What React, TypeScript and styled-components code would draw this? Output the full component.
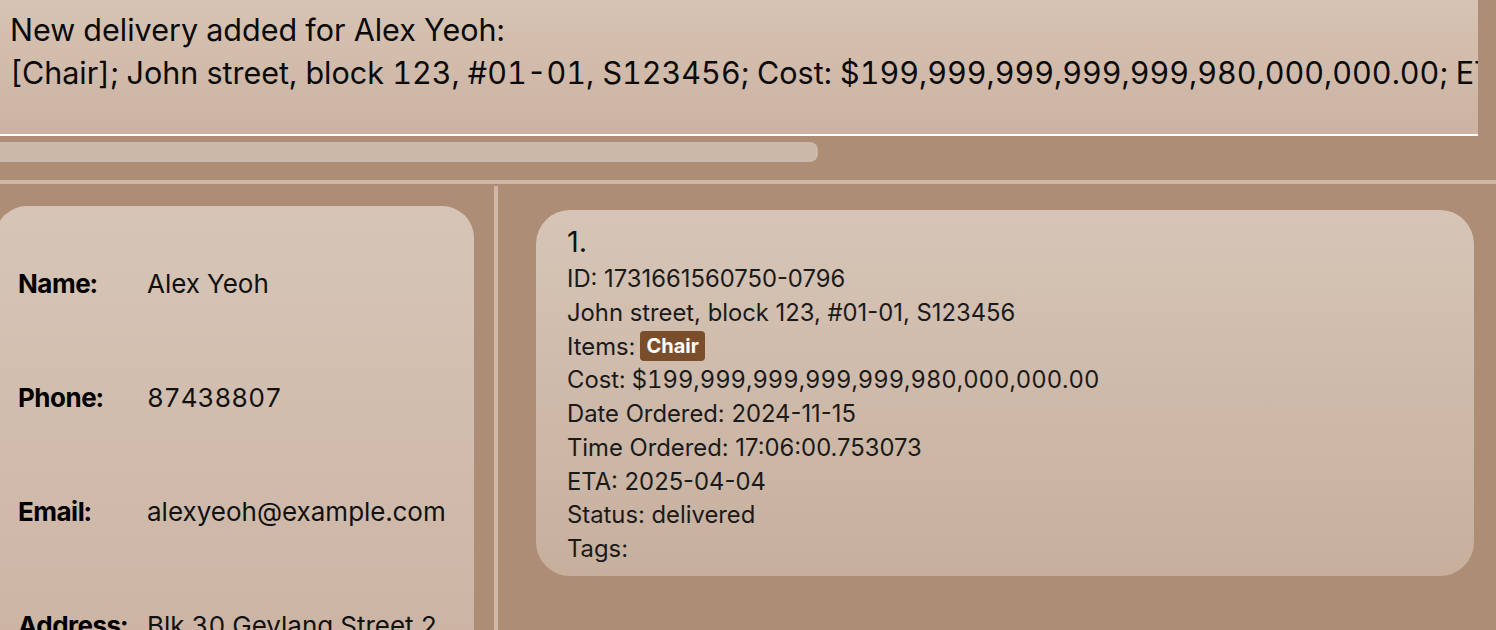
import React from "react";
import styled, { createGlobalStyle } from "styled-components";

const Global = createGlobalStyle`
  html, body { margin: 0; padding: 0; }
  body { font-family: Inter, "Noto Sans", sans-serif; background: #ad8d75; }
`;

const Window = styled.div`
  width: 1496px;
  height: 630px;
  overflow: hidden;
  background: #ad8d75;
  display: flex;
  flex-direction: column;
  font-family: Inter, "Noto Sans", sans-serif;
  color: #111;
`;

const ResultBox = styled.div`
  width: 1478px;
  height: 136px;
  box-sizing: border-box;
  padding: 8px 10px;
  background: linear-gradient(180deg, #d6c3b3 0%, #d4bfaf 25%, #ccb2a2 100%);
  border-bottom: 2px solid #ffffff;
  font-size: 30.5px;
  line-height: 43px;
  font-feature-settings: "tnum" 1;
  white-space: pre;
  overflow: hidden;
  color: #0a0a0a;
  flex: none;
`;

const ScrollTrack = styled.div`
  height: 44px;
  padding-top: 6px;
  box-sizing: border-box;
  flex: none;
`;

const ScrollThumb = styled.div`
  width: 818px;
  height: 20px;
  background: #ccb8a8;
  border-radius: 0 8px 8px 0;
`;

const HDivider = styled.div`
  height: 4px;
  background: #cfb8a8;
  flex: none;
`;

const Main = styled.div`
  flex: 1;
  display: flex;
  min-height: 0;
`;

const LeftPane = styled.div`
  width: 494px;
  flex: none;
  padding-top: 22px;
  box-sizing: border-box;
  overflow: hidden;
`;

const VDivider = styled.div`
  width: 4px;
  margin-top: 2px;
  background: #cfb8a8;
  flex: none;
`;

const RightPane = styled.div`
  flex: 1;
  padding: 26px 0 0 38px;
  box-sizing: border-box;
`;

const PersonCard = styled.div`
  margin-left: -5px;
  width: 479px;
  height: 520px;
  box-sizing: border-box;
  padding: 21px 0 0 23px;
  border-radius: 32px 32px 0 0;
  background: linear-gradient(180deg, #d6c5b7 0%, #cdb5a5 80%, #c8ae9d 100%);
  display: grid;
  grid-template-columns: 129px 302px;
  grid-auto-rows: 114px;
  align-items: start;
  font-size: 26px;
  line-height: 32px;
  font-feature-settings: "tnum" 1;
`;

const FieldLabel = styled.div`
  padding-top: 41px;
  font-weight: 700;
  letter-spacing: -0.5px;
  color: #000;
`;

const FieldValue = styled.div`
  padding-top: 41px;
  word-break: break-all;
  color: #111;
`;

const DeliveryCard = styled.div`
  width: 938px;
  box-sizing: border-box;
  padding: 12px 0 10px 31px;
  border-radius: 34px;
  background: linear-gradient(180deg, #d6c5b7 0%, #c7af9d 100%);
  font-size: 23.8px;
  line-height: 33.75px;
  color: #1a1a1a;
`;

const Index = styled.div`
  font-size: 29px;
  line-height: 40px;
  color: #111;
`;

const Line = styled.div<{ $tabular?: boolean }>`
  white-space: nowrap;
  display: flex;
  align-items: center;
  gap: 5px;
  font-feature-settings: ${(p) => (p.$tabular ? '"tnum" 1' : "normal")};
`;

const Tag = styled.span`
  display: inline-block;
  height: 30px;
  background: #7a4e2b;
  color: #fff;
  font-weight: 700;
  font-size: 20px;
  line-height: 30px;
  padding: 0 6px;
  border-radius: 4px;
`;

const person = [
  ["Name:", "Alex Yeoh"],
  ["Phone:", "87438807"],
  ["Email:", "alexyeoh@example.com"],
  ["Address:", "Blk 30 Geylang Street 29, #06-40"],
];

export default function App() {
  return (
    <>
      <Global />
      <Window>
        <ResultBox>
          {"New delivery added for Alex Yeoh:\n[Chair]; John street, block 123, #01-01, S123456; Cost: $199,999,999,999,999,980,000,000.00; ETA: 2025-04-04; Status: delivered"}
        </ResultBox>
        <ScrollTrack>
          <ScrollThumb />
        </ScrollTrack>
        <HDivider />
        <Main>
          <LeftPane>
            <PersonCard>
              {person.map(([k, v]) => (
                <React.Fragment key={k}>
                  <FieldLabel>{k}</FieldLabel>
                  <FieldValue>{v}</FieldValue>
                </React.Fragment>
              ))}
            </PersonCard>
          </LeftPane>
          <VDivider />
          <RightPane>
            <DeliveryCard>
              <Index>1.</Index>
              <Line>ID: 1731661560750-0796</Line>
              <Line>John street, block 123, #01-01, S123456</Line>
              <Line>
                Items: <Tag>Chair</Tag>
              </Line>
              <Line $tabular>Cost: $199,999,999,999,999,980,000,000.00</Line>
              <Line>Date Ordered: 2024-11-15</Line>
              <Line>Time Ordered: 17:06:00.753073</Line>
              <Line>ETA: 2025-04-04</Line>
              <Line>Status: delivered</Line>
              <Line>Tags:</Line>
            </DeliveryCard>
          </RightPane>
        </Main>
      </Window>
    </>
  );
}
